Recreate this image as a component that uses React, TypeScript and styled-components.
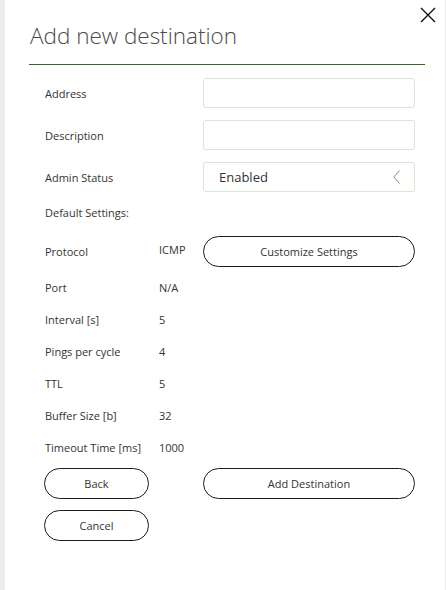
import React from "react";
import styled, { createGlobalStyle } from "styled-components";

const Global = createGlobalStyle`
  html, body { margin: 0; padding: 0; background: #ffffff; }
  body { font-family: "Open Sans", "Noto Sans", sans-serif; color: #333; }
`;

const Page = styled.div`
  width: 446px;
  height: 590px;
  box-sizing: border-box;
  border-left: 5px solid #ececec;
  border-right: 1px solid #ececec;
  background: #fff;
  position: relative;
`;

const Header = styled.header`
  padding: 19px 20px 0 24px;
`;

const Title = styled.h1`
  margin: 0;
  padding-left: 1px;
  font-family: "Open Sans", sans-serif;
  font-weight: 300;
  font-size: 22.5px;
  line-height: 34px;
  color: #4a4a4a;
  padding-bottom: 11px;
  border-bottom: 1.5px solid #2f6b22;
`;

const Close = styled.button`
  position: absolute;
  top: 7px;
  right: 9px;
  width: 16px;
  height: 16px;
  padding: 0;
  border: none;
  background: none;
  display: flex;
`;

const Body = styled.div`
  padding: 13px 30px 0 40px;
  display: flex;
  flex-direction: column;
`;

const FieldRow = styled.div`
  display: grid;
  grid-template-columns: 158px 212px;
  align-items: center;
  height: 30px;
  margin-bottom: 12px;
`;

const Label = styled.span`
  font-size: 11px;
  color: #333;
`;

const Input = styled.div`
  height: 30px;
  box-sizing: border-box;
  border: 1px solid #d6e6d1;
  border-radius: 3px;
  background: #fff;
`;

const Select = styled(Input)`
  display: flex;
  align-items: center;
  justify-content: space-between;
  padding: 0 14px 0 15px;
  font-size: 13px;
  color: #333;
`;

const SectionTitle = styled.div`
  font-size: 11px;
  color: #333;
  height: 20px;
  line-height: 20px;
  margin: -1px 0 13px;
`;

const InfoRow = styled.div<{ $tall?: boolean }>`
  display: grid;
  grid-template-columns: 114px 44px 212px;
  align-items: center;
  height: ${(p) => (p.$tall ? "31px" : "32px")};
  margin-bottom: ${(p) => (p.$tall ? "4px" : "0")};
  font-size: 11px;
`;

const Value = styled.span<{ $up?: boolean }>`
  font-size: 11px;
  color: #333;
  margin-top: ${(p) => (p.$up ? "-4px" : "0")};
`;

const PillButton = styled.button<{ $w?: number }>`
  height: 31px;
  width: ${(p) => (p.$w ? `${p.$w}px` : "100%")};
  box-sizing: border-box;
  border: 1px solid #1c1c1c;
  border-radius: 16px;
  background: #fff;
  font-family: "Open Sans", sans-serif;
  font-size: 11px;
  color: #333;
  padding: 0;
`;

const ButtonRow = styled.div<{ $first?: boolean }>`
  display: grid;
  grid-template-columns: 105px 54px 212px;
  margin-top: ${(p) => (p.$first ? "5px" : "0")};
  margin-left: -1px;
  margin-bottom: 11px;
`;

const settings: [string, string][] = [
  ["Port", "N/A"],
  ["Interval [s]", "5"],
  ["Pings per cycle", "4"],
  ["TTL", "5"],
  ["Buffer Size [b]", "32"],
  ["Timeout Time [ms]", "1000"],
];

export default function App() {
  return (
    <>
      <Global />
      <Page>
        <Close aria-label="Close">
          <svg width="16" height="16" viewBox="0 0 16 16">
            <path d="M1 1 L15 15 M15 1 L1 15" stroke="#111" strokeWidth="1.4" fill="none" />
          </svg>
        </Close>
        <Header>
          <Title>Add new destination</Title>
        </Header>
        <Body>
          <FieldRow>
            <Label>Address</Label>
            <Input />
          </FieldRow>
          <FieldRow>
            <Label>Description</Label>
            <Input />
          </FieldRow>
          <FieldRow>
            <Label>Admin Status</Label>
            <Select>
              <span>Enabled</span>
              <svg width="7" height="14" viewBox="0 0 7 14">
                <path d="M6.5 0.5 L0.8 7 L6.5 13.5" stroke="#888" strokeWidth="1" fill="none" />
              </svg>
            </Select>
          </FieldRow>
          <SectionTitle>Default Settings:</SectionTitle>
          <InfoRow $tall>
            <Label>Protocol</Label>
            <Value $up>ICMP</Value>
            <PillButton>Customize Settings</PillButton>
          </InfoRow>
          {settings.map(([k, v]) => (
            <InfoRow key={k}>
              <Label>{k}</Label>
              <Value>{v}</Value>
              <span />
            </InfoRow>
          ))}
          <ButtonRow $first>
            <PillButton $w={105}>Back</PillButton>
            <span />
            <PillButton>Add Destination</PillButton>
          </ButtonRow>
          <ButtonRow>
            <PillButton $w={105}>Cancel</PillButton>
          </ButtonRow>
        </Body>
      </Page>
    </>
  );
}
